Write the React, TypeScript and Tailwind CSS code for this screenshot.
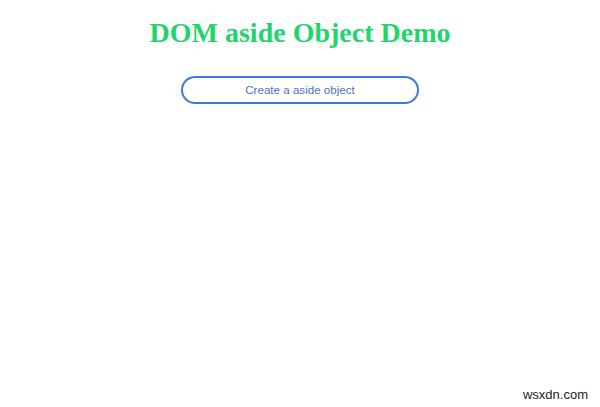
export default function App() {
  return (
    <div className="relative h-[407px] w-[600px] bg-white">
      <div className="flex flex-col items-center pt-[15px]">
        <h1 className="font-['Liberation_Serif',serif] text-[28px] font-bold leading-[35px] text-[#22d46c]">
          DOM aside Object Demo
        </h1>
        <button className="mt-[26px] h-[28px] w-[238px] rounded-full border-2 border-[#3d7bd6] bg-white font-['Liberation_Sans',Arial,sans-serif] text-[11.6px] text-[#4a74c4]">
          Create a aside object
        </button>
      </div>
      <div className="absolute bottom-[3px] right-[12px] font-['Liberation_Sans',Arial,sans-serif] text-[13px] text-[#222]">
        wsxdn.com
      </div>
    </div>
  )
}
